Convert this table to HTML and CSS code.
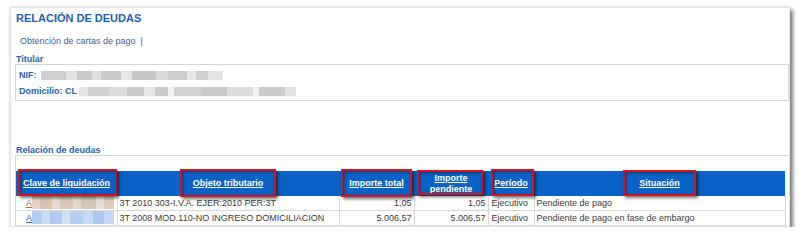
FILE: index.html
```html
<!DOCTYPE html>
<html lang="es">
<head>
<meta charset="utf-8">
<title>Relación de deudas</title>
<link rel="stylesheet" href="styles.css">
</head>
<body>
<div class="card">
  <h1 class="title">RELACIÓN DE DEUDAS</h1>
  <div class="menu"><a class="menu-link" href="#">Obtención de cartas de pago</a><span class="sep">|</span></div>
  <h2 class="section">Titular</h2>
  <div class="holder">
    <div class="holder-row"><span class="label">NIF:</span><span class="blur blur-nif"></span></div>
    <div class="holder-row"><span class="label">Domicilio: CL</span><span class="blur blur-dom"></span></div>
  </div>
  <h2 class="section section-debts">Relación de deudas</h2>
  <div class="debts">
    <table class="grid">
      <colgroup>
        <col class="c1"><col class="c2"><col class="c3"><col class="c4"><col class="c5"><col class="c6">
      </colgroup>
      <thead>
        <tr>
          <th><a href="#">Clave de liquidación</a></th>
          <th><a href="#">Objeto tributario</a></th>
          <th><a href="#">Importe total</a></th>
          <th><a href="#">Importe<br>pendiente</a></th>
          <th><a href="#">Período</a></th>
          <th><a href="#">Situación</a></th>
        </tr>
      </thead>
      <tbody>
        <tr>
          <td class="key"><a class="key-link visited" href="#">A</a><span class="blur blur-tan"></span></td>
          <td>3T 2010 303-I.V.A. EJER:2010 PER:3T</td>
          <td class="num">1,05</td>
          <td class="num">1,05</td>
          <td class="per">Ejecutivo</td>
          <td>Pendiente de pago</td>
        </tr>
        <tr>
          <td class="key"><a class="key-link" href="#">A</a><span class="blur blur-blue"></span></td>
          <td>3T 2008 MOD.110-NO INGRESO DOMICILIACION</td>
          <td class="num">5.006,57</td>
          <td class="num">5.006,57</td>
          <td class="per">Ejecutivo</td>
          <td>Pendiente de pago en fase de embargo</td>
        </tr>
        <tr>
          <td class="key"></td><td></td><td></td><td></td><td></td><td></td>
        </tr>
      </tbody>
    </table>
    <span class="mark mark-clave"></span>
    <span class="mark mark-objeto"></span>
    <span class="mark mark-total"></span>
    <span class="mark mark-pend"></span>
    <span class="mark mark-per"></span>
    <span class="mark mark-sit"></span>
  </div>
</div>
</body>
</html>
```

FILE: styles.css
```css
html, body {
  margin: 0;
  padding: 0;
  background: #ffffff;
}

body {
  font-family: "Liberation Sans", Arial, sans-serif;
  font-size: 9px;
  color: #333333;
}

.card {
  box-sizing: border-box;
  width: 780px;
  height: 220px;
  margin: 7px 0 0 10px;
  padding: 4px 0 0 4px;
  border: 1px solid #e2e2e2;
  background: #ffffff;
  overflow: hidden;
  box-shadow: 3px 3px 4px rgba(0, 0, 0, 0.5), 0 0 3px rgba(0, 0, 0, 0.12);
}

.title {
  margin: 0;
  font-size: 11px;
  line-height: 13px;
  font-weight: bold;
  color: #1f5fae;
  padding-left: 1px;
}

.menu {
  margin-top: 11px;
  padding-left: 5px;
  line-height: 11px;
  height: 11px;
}

.menu-link {
  color: #3a5f9e;
  text-decoration: none;
}

.sep {
  margin-left: 5px;
  color: #555555;
}

.section {
  margin: 7px 0 0 0;
  font-size: 9px;
  line-height: 10px;
  height: 10px;
  font-weight: bold;
  color: #2464ad;
  padding-left: 1px;
}

.holder {
  border: 1px solid #d6d6d6;
  padding: 2px 0 1px 3px;
}

.holder-row {
  display: flex;
  align-items: center;
  height: 16px;
  line-height: 16px;
}

.label {
  font-weight: bold;
  color: #2464ad;
  margin-right: 3px;
}

.blur {
  display: inline-block;
  height: 9px;
}

.blur-nif {
  width: 182px;
  margin-left: 1px;
  background: linear-gradient(90deg,
    #cfcfcf 0 14%, #e2e2e2 14% 20%, #c9c9c9 20% 28%, #dedede 28% 33%,
    #cccccc 33% 44%, #e6e6e6 44% 50%, #c6c6c6 50% 63%, #dadada 63% 70%,
    #cdcdcd 70% 80%, #e8e8e8 80% 85%, #cfcfcf 85% 92%, #e4e4e4 92% 100%);
}

.blur-dom {
  width: 217px;
  margin-left: -1px;
  background: linear-gradient(90deg,
    #e4e4e4 0 4%, #d0d0d0 4% 14%, #dcdcdc 14% 22%, #c8c8c8 22% 30%,
    #e6e6e6 30% 35%, #cccccc 35% 41%, #f2f2f2 41% 44%, #d2d2d2 44% 56%,
    #c9c9c9 56% 68%, #dddddd 68% 80%, #f0f0f0 80% 83%, #cbcbcb 83% 95%, #e2e2e2 95% 100%);
}

.section-debts {
  margin-top: 44px;
}

.debts {
  position: relative;
  border-top: 1px solid #d6d6d6;
  border-left: 1px solid #d6d6d6;
  padding-top: 15px;
}

.grid {
  border-collapse: collapse;
  table-layout: fixed;
  width: 769px;
}

.c1 { width: 101px; }
.c2 { width: 222px; }
.c3 { width: 75px; }
.c4 { width: 74px; }
.c5 { width: 46px; }
.c6 { width: 251px; }

.grid th {
  background: #0a62c6;
  height: 25px;
  padding: 0;
  font-weight: bold;
  line-height: 11px;
  text-align: center;
  vertical-align: middle;
}

.grid th a {
  color: #ffffff;
  text-decoration: underline;
}

.grid td {
  height: 14px;
  line-height: 14px;
  padding: 0 2px;
  border: 1px solid #d9d9d9;
  border-top: none;
  white-space: nowrap;
  overflow: hidden;
  color: #3a3a3a;
}

.grid td:first-child {
  border-left: none;
}

.grid td:last-child {
  border-right: 1px solid #d9d9d9;
}

.grid .key {
  padding-left: 10px;
}

.grid .num {
  text-align: right;
}

.grid .per {
  padding-left: 3px;
}

.key-link {
  color: #2a63c0;
  text-decoration: underline;
}

.key-link.visited {
  color: #a8703e;
}

.blur-tan,
.blur-blue {
  width: 82px;
  height: 13px;
  vertical-align: top;
  margin-left: 0;
}

.blur-tan {
  background: linear-gradient(90deg,
    #e2d2c4 0 10%, #d9c4b2 10% 24%, #e6dad0 24% 34%, #dac8b9 34% 50%,
    #e4d8cd 50% 60%, #d8c6b7 60% 78%, #e8ded6 78% 88%, #dccbbd 88% 100%);
}

.blur-blue {
  background: linear-gradient(90deg,
    #b3cdf0 0 12%, #c9dbf4 12% 22%, #b0caee 22% 36%, #cfe0f6 36% 46%,
    #b6cff1 46% 62%, #c6d9f4 62% 74%, #adc8ee 74% 88%, #c4d7f3 88% 100%);
}

.mark {
  position: absolute;
  box-sizing: border-box;
  border: 2px solid #d7141d;
  box-shadow: 2px 2px 3px rgba(0, 0, 0, 0.55), inset 1px 1px 3px rgba(0, 0, 0, 0.45);
  pointer-events: none;
}

.mark-clave  { left: 2px;   top: 13px; width: 99px; height: 27px; }
.mark-objeto { left: 164px; top: 13px; width: 96px; height: 28px; }
.mark-total  { left: 325px; top: 13px; width: 71px; height: 28px; }
.mark-pend   { left: 401px; top: 14px; width: 66px; height: 25px; }
.mark-per    { left: 475px; top: 13px; width: 43px; height: 27px; }
.mark-sit    { left: 607px; top: 14px; width: 73px; height: 26px; }
```
